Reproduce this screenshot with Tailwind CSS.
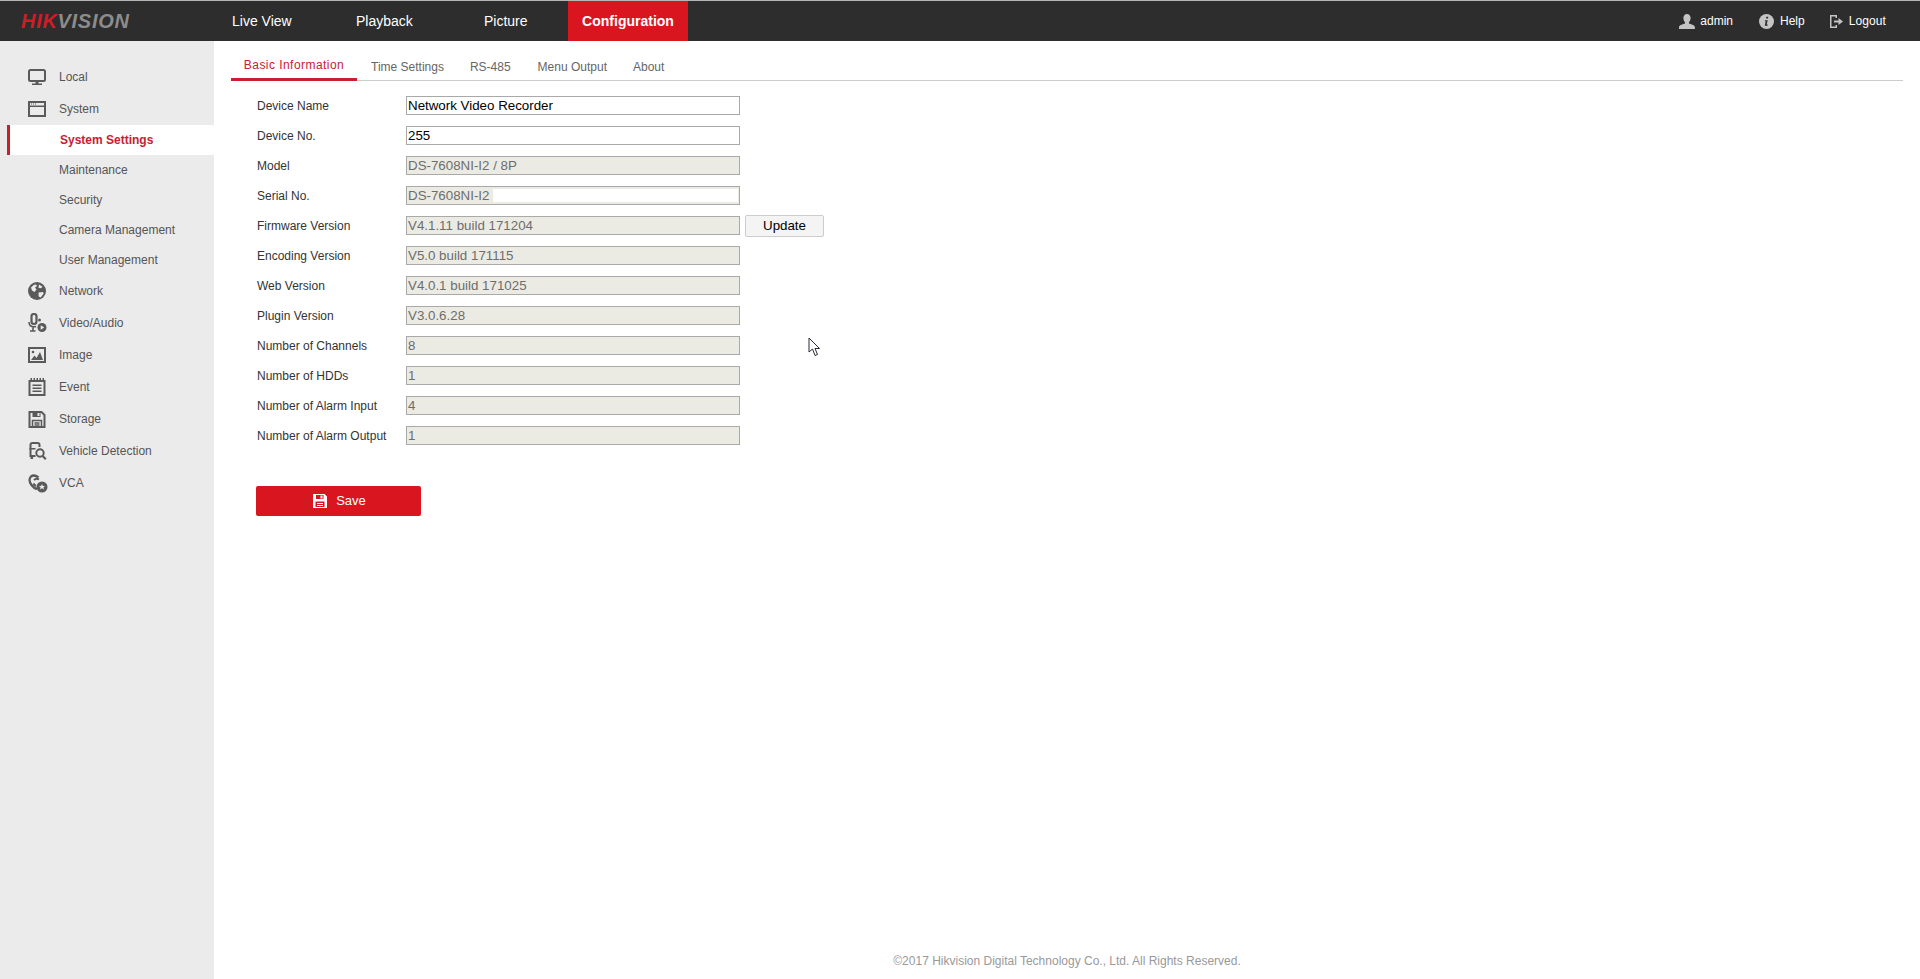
<!DOCTYPE html>
<html lang="en">
<head>
    <meta charset="UTF-8">
    <title>Configuration</title>
    <script src="https://cdn.jsdelivr.net/npm/@tailwindcss/browser@4"></script>
</head>
<body class="bg-white font-['Liberation_Sans',Arial,sans-serif] text-xs">
<div class="relative h-[979px] w-[1920px] overflow-hidden">
    <!-- Header -->
    <header class="flex h-[41px] items-stretch border-t border-[#b5b5b5] bg-[#2d2d2d] text-white">
        <div class="flex w-[232px] items-center pl-[21px]">
            <span class="text-[20px] leading-none font-bold italic tracking-[0.7px] text-[#d01c28]">HIK</span><span class="text-[20px] leading-none font-bold italic tracking-[0.7px] text-[#8c8c8c]">VISION</span>
        </div>
        <nav class="flex items-stretch text-sm">
            <a class="flex w-[124px] items-center">Live View</a>
            <a class="flex w-[128px] items-center">Playback</a>
            <a class="flex w-[84px] items-center">Picture</a>
            <a class="flex w-[120px] items-center justify-center bg-[#d9161f] font-bold">Configuration</a>
        </nav>
        <div class="ml-auto flex items-center pr-[34px]">
            <svg class="mr-[5px]" width="16" height="15" viewBox="0 0 16 15"><path fill="#c4c4c4" d="M8 0c2.3 0 3.6 1.700 3.600 4 0 1.800-.8 3.300-1.700 4.200v1.300c1.800.8 6 1.500 6 3.700V15H0v-1.800c0-2.200 4.200-2.900 6-3.700V8.200C5.100 7.300 4.400 5.800 4.400 4 4.400 1.700 5.700 0 8 0z"/></svg>
            <span class="mr-[26px]">admin</span>
            <svg class="mr-[6px]" width="15" height="15" viewBox="0 0 15 15"><circle cx="7.500" cy="7.500" r="7.500" fill="#c4c4c4"/><path fill="#2d2d2d" d="M7.300 2.800h2l-.3 1.700H7zM6 6.200h2.700l-1 4.400h1l-.2 1.200H5.700l1-4.500H5.800z"/></svg>
            <span class="mr-[25px]">Help</span>
            <svg class="mr-[6px]" width="13" height="13" viewBox="0 0 13 13"><path fill="#c4c4c4" d="M0 0h7v3H5.500V1.500h-4v10h4V10H7v3H0z"/><path fill="#c4c4c4" d="M4 5.500h4.500V3L13 6.500 8.500 10V7.500H4z"/></svg>
            <span class="tracking-[0.1px]">Logout</span>
        </div>
    </header>

    <div class="flex h-[938px]">
        <!-- Sidebar -->
        <aside class="w-[214px] shrink-0 bg-[#ebebeb] pt-[20px] text-[#555]">
            <div class="flex h-8 items-center pl-[28px]">
                <svg class="mr-[13px] w-[18px]" width="18" height="17" viewBox="0 0 18 17"><path fill="none" stroke="#5a5a5a" stroke-width="2" d="M2.500 1h13a1.500 1.500 0 0 1 1.500 1.500v8a1.500 1.500 0 0 1-1.500 1.500h-13A1.500 1.500 0 0 1 1 10.500v-8A1.500 1.500 0 0 1 2.500 1z"/><path fill="#5a5a5a" d="M7.500 12h3v2.500h3.500V16H4v-1.500h3.500z"/></svg>
                <span>Local</span>
            </div>
            <div class="flex h-8 items-center pl-[28px]">
                <svg class="mr-[13px] w-[18px]" width="18" height="16" viewBox="0 0 18 16"><path fill="none" stroke="#5a5a5a" stroke-width="2" d="M1 1h16v14H1z"/><path fill="#5a5a5a" d="M1 4.500h16V6H1z"/><path fill="#5a5a5a" d="M3 2.500h1v1H3zM5 2.500h1v1H5zM7 2.500h1v1H7z"/></svg>
                <span>System</span>
            </div>
            <div class="ml-[7px] flex h-[30px] items-center border-l-[3px] border-[#c8202f] bg-white pl-[50px] font-bold text-[#c8202f]">System Settings</div>
            <div class="flex h-[30px] items-center pl-[59px]">Maintenance</div>
            <div class="flex h-[30px] items-center pl-[59px]">Security</div>
            <div class="flex h-[30px] items-center pl-[59px]">Camera Management</div>
            <div class="flex h-[30px] items-center pl-[59px]">User Management</div>
            <div class="flex h-8 items-center pl-[28px]">
                <svg class="mr-[13px] w-[18px]" width="18" height="18" viewBox="0 0 18 18"><circle cx="9" cy="9" r="9" fill="#5a5a5a"/><path fill="#ebebeb" d="M3 5.500c1.500-1.500 2.500-2.800 5-3l1 1.500-2 1.500 1.500 2-2 2.500L4 8.500zM11 2.500l3.500 2.300-1.500 1.500-2.500-.5zM10.500 10.500l4.500-.5.700 1.500-3 4-2-1z"/></svg>
                <span>Network</span>
            </div>
            <div class="flex h-8 items-center pl-[28px]">
                <svg class="mr-[12px] w-[19px]" width="19" height="20" viewBox="0 0 19 20"><path fill="none" stroke="#5a5a5a" stroke-width="2.200" d="M3.500 3.500a2.500 2.500 0 0 1 5 0v5a2.500 2.500 0 0 1-5 0z"/><path fill="none" stroke="#5a5a5a" stroke-width="1.600" d="M1 9c0 3 2 4.700 5 4.700 1 0 1.500 0 2-.2M5 14v3.200M2 18h5.500"/><circle cx="11.500" cy="7" r="1.500" fill="#5a5a5a"/><circle cx="14" cy="14.500" r="4.500" fill="#5a5a5a"/><path fill="#ebebeb" d="M12.700 12.200l3.500 2.300-3.500 2.300z"/></svg>
                <span>Video/Audio</span>
            </div>
            <div class="flex h-8 items-center pl-[28px]">
                <svg class="mr-[13px] w-[18px]" width="18" height="16" viewBox="0 0 18 16"><path fill="none" stroke="#5a5a5a" stroke-width="2" d="M1 1h16v14H1z"/><path fill="#5a5a5a" d="M3 13l3.500-4.500L8.500 11l3.500-6 3 8z"/><circle cx="5" cy="5" r="1.300" fill="#5a5a5a"/></svg>
                <span>Image</span>
            </div>
            <div class="flex h-8 items-center pl-[28px]">
                <svg class="mr-[13px] w-[18px]" width="17" height="18" viewBox="0 0 17 18"><path fill="none" stroke="#5a5a5a" stroke-width="2" d="M1 3h15v14H1z"/><path fill="#5a5a5a" d="M2 0h1.500v3H2zM5 0h1.500v3H5zM8 0h1.500v3H8zM11 0h1.500v3H11zM14 0h1.500v3H14zM4 6.500h9V8H4zM4 9.500h9V11H4zM4 12.500h9V14H4z"/></svg>
                <span>Event</span>
            </div>
            <div class="flex h-8 items-center pl-[28px]">
                <svg class="mr-[13px] w-[18px]" width="17" height="17" viewBox="0 0 17 17"><path fill="none" stroke="#5a5a5a" stroke-width="2" d="M1 1h12l3 3v12H1z"/><path fill="#5a5a5a" d="M4 1h8v5H4z"/><path fill="#ebebeb" d="M9 2h2v3H9z"/><path fill="none" stroke="#5a5a5a" stroke-width="1.500" d="M4 9.500h9v6.500H4zM6 12h5M6 14h5"/></svg>
                <span>Storage</span>
            </div>
            <div class="flex h-8 items-center pl-[28px]">
                <svg class="mr-[12px] w-[19px]" width="18" height="18" viewBox="0 0 18 18"><path fill="none" stroke="#5a5a5a" stroke-width="2" d="M7 14H2V3a2 2 0 0 1 2-2h5a2 2 0 0 1 2 2v2"/><path fill="#5a5a5a" d="M1 6h6v1.500H1zM2 14h2.500v3H2zM4.500 0h3v1.500h-3z"/><circle cx="11.500" cy="11" r="3.700" fill="none" stroke="#5a5a5a" stroke-width="2"/><path stroke="#5a5a5a" stroke-width="2.200" d="M14 13.700l3.300 3.500"/></svg>
                <span>Vehicle Detection</span>
            </div>
            <div class="flex h-8 items-center pl-[28px]">
                <svg class="mr-[11px] w-[20px]" width="20" height="19" viewBox="0 0 20 19"><path fill="none" stroke="#5a5a5a" stroke-width="2.400" d="M10.500 3.500C8 1.500 5 1 3 2.500 1 4.500 1.200 8 3.500 11c1.500 2 3.500 3.500 5.500 4"/><path fill="none" stroke="#5a5a5a" stroke-width="2" d="M6 6c1.500-1.500 3.500-1.500 5-.5M5.500 9.500c.5 1 1.500 2 2.500 2.500"/><circle cx="14" cy="13" r="5.500" fill="#5a5a5a"/><path fill="#ebebeb" d="M14 10l.9 2h2.100l-1.600 1.400.6 2.100-2-1.200-2 1.200.6-2.100L11 12h2.100z"/></svg>
                <span>VCA</span>
            </div>
        </aside>

        <!-- Content -->
        <main class="flex-1 pl-[17px]">
            <div class="flex h-10 w-[1672px] border-b border-[#ccc] text-[#666]">
                <a class="-mb-px flex h-10 w-[126px] items-start justify-center border-b-[3px] border-[#c8202f] pt-[16px] tracking-[0.45px] text-[#c8202f]">Basic Information</a>
                <a class="flex items-center pt-[13px] pr-[13px] pl-[14px]">Time Settings</a>
                <a class="flex items-center px-[13px] pt-[13px]">RS-485</a>
                <a class="flex items-center pt-[13px] pr-[13px] pl-[14px]">Menu Output</a>
                <a class="flex items-center px-[13px] pt-[13px]">About</a>
            </div>

            <div class="mt-[10px] pl-[25px] text-[#333]">
                <div class="flex h-[30px] items-center pl-px">
                    <span class="w-[149px]">Device Name</span>
                    <input class="mb-px h-[19px] w-[334px] border border-[#a9a9a9] bg-white px-px pb-px text-[13.33px] text-black" value="Network Video Recorder">
                </div>
                <div class="flex h-[30px] items-center pl-px">
                    <span class="w-[149px]">Device No.</span>
                    <input class="mb-px h-[19px] w-[334px] border border-[#a9a9a9] bg-white px-px pb-px text-[13.33px] text-black" value="255">
                </div>
                <div class="flex h-[30px] items-center pl-px">
                    <span class="w-[149px]">Model</span>
                    <input disabled class="mb-px h-[19px] w-[334px] border border-[#a9a9a9] bg-[#ebebe4] px-px pb-px text-[13.33px] text-[#6d6d6d]" value="DS-7608NI-I2 / 8P">
                </div>
                <div class="flex h-[30px] items-center pl-px">
                    <span class="w-[149px]">Serial No.</span>
                    <div class="relative mb-px">
                        <input disabled class="block h-[19px] w-[334px] border border-[#a9a9a9] bg-[#ebebe4] px-px pb-px text-[13.33px] text-[#6d6d6d]" value="DS-7608NI-I2">
                        <div class="absolute top-[3px] left-[87px] h-[13px] w-[245px] bg-white"></div>
                    </div>
                </div>
                <div class="flex h-[30px] items-center pl-px">
                    <span class="w-[149px]">Firmware Version</span>
                    <input disabled class="mb-px h-[19px] w-[334px] border border-[#a9a9a9] bg-[#ebebe4] px-px pb-px text-[13.33px] text-[#6d6d6d]" value="V4.1.11 build 171204">
                    <button class="ml-[5px] h-[22px] w-[79px] rounded-[2px] border border-[#ccc] bg-[#f4f4f4] text-[13.33px] text-black">Update</button>
                </div>
                <div class="flex h-[30px] items-center pl-px">
                    <span class="w-[149px]">Encoding Version</span>
                    <input disabled class="mb-px h-[19px] w-[334px] border border-[#a9a9a9] bg-[#ebebe4] px-px pb-px text-[13.33px] text-[#6d6d6d]" value="V5.0 build 171115">
                </div>
                <div class="flex h-[30px] items-center pl-px">
                    <span class="w-[149px]">Web Version</span>
                    <input disabled class="mb-px h-[19px] w-[334px] border border-[#a9a9a9] bg-[#ebebe4] px-px pb-px text-[13.33px] text-[#6d6d6d]" value="V4.0.1 build 171025">
                </div>
                <div class="flex h-[30px] items-center pl-px">
                    <span class="w-[149px]">Plugin Version</span>
                    <input disabled class="mb-px h-[19px] w-[334px] border border-[#a9a9a9] bg-[#ebebe4] px-px pb-px text-[13.33px] text-[#6d6d6d]" value="V3.0.6.28">
                </div>
                <div class="flex h-[30px] items-center pl-px">
                    <span class="w-[149px]">Number of Channels</span>
                    <input disabled class="mb-px h-[19px] w-[334px] border border-[#a9a9a9] bg-[#ebebe4] px-px pb-px text-[13.33px] text-[#6d6d6d]" value="8">
                </div>
                <div class="flex h-[30px] items-center pl-px">
                    <span class="w-[149px]">Number of HDDs</span>
                    <input disabled class="mb-px h-[19px] w-[334px] border border-[#a9a9a9] bg-[#ebebe4] px-px pb-px text-[13.33px] text-[#6d6d6d]" value="1">
                </div>
                <div class="flex h-[30px] items-center pl-px">
                    <span class="w-[149px]">Number of Alarm Input</span>
                    <input disabled class="mb-px h-[19px] w-[334px] border border-[#a9a9a9] bg-[#ebebe4] px-px pb-px text-[13.33px] text-[#6d6d6d]" value="4">
                </div>
                <div class="flex h-[30px] items-center pl-px">
                    <span class="w-[149px]">Number of Alarm Output</span>
                    <input disabled class="mb-px h-[19px] w-[334px] border border-[#a9a9a9] bg-[#ebebe4] px-px pb-px text-[13.33px] text-[#6d6d6d]" value="1">
                </div>
                <button class="mt-[35px] flex h-[30px] w-[165px] items-center justify-center rounded-[2px] bg-[#d9161f] pl-[2px] text-[13px] text-white">
                    <svg class="mr-[9px]" width="14" height="14" viewBox="0 0 14 14"><path fill="#fff" fill-rule="evenodd" d="M0 0h11.500L14 2.500V14H0zM3 1v4h7.500V1zM7.500 1.500h2v3h-2zM2.500 7.500v5.500h9V7.500z"/><path fill="#fff" d="M4 9h6v1H4zM4 11h6v1H4z"/></svg>
                    Save
                </button>
            </div>
        </main>
    </div>

    <footer class="absolute bottom-[10px] left-[214px] w-[1706px] text-center text-[#999]">©2017 Hikvision Digital Technology Co., Ltd. All Rights Reserved.</footer>

    <!-- mouse pointer -->
    <svg class="absolute top-[337px] left-[808px]" width="13" height="20" viewBox="0 0 13 20"><path fill="#fff" stroke="#2a2a3a" stroke-width="1" d="M1 1v14l3.500-3 2.500 6.500 2.500-1-2.500-6h4.500z"/></svg>
</div>
</body>
</html>
